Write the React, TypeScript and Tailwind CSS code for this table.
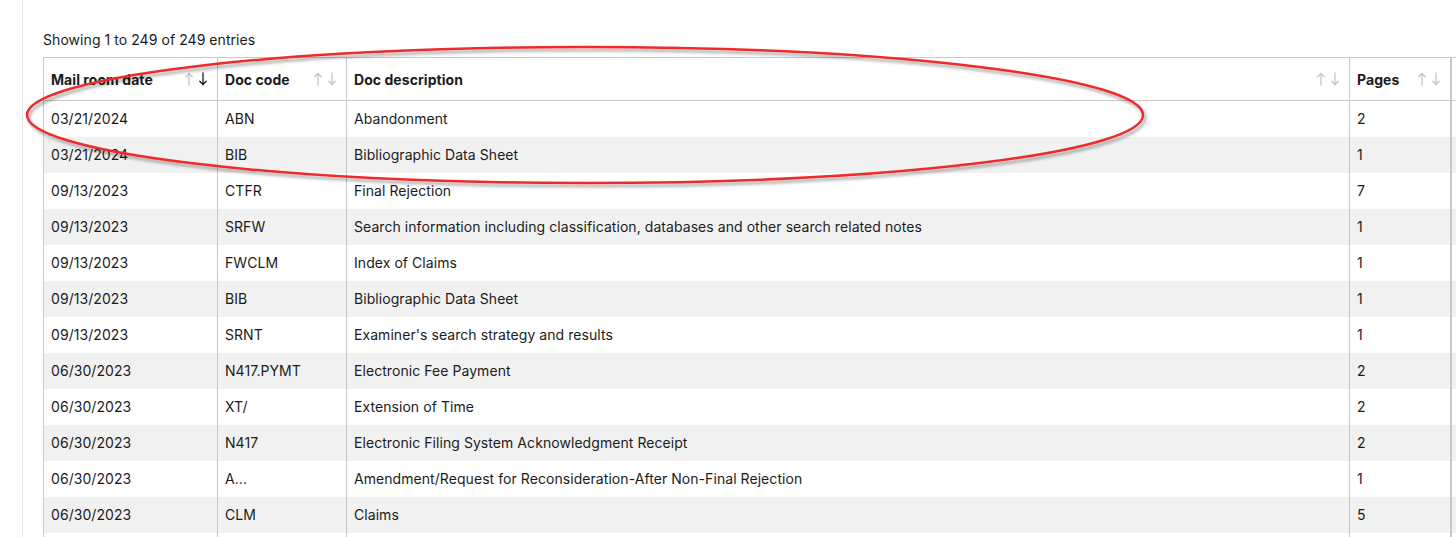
const rows = [
  ["03/21/2024", "ABN", "Abandonment", "2"],
  ["03/21/2024", "BIB", "Bibliographic Data Sheet", "1"],
  ["09/13/2023", "CTFR", "Final Rejection", "7"],
  ["09/13/2023", "SRFW", "Search information including classification, databases and other search related notes", "1"],
  ["09/13/2023", "FWCLM", "Index of Claims", "1"],
  ["09/13/2023", "BIB", "Bibliographic Data Sheet", "1"],
  ["09/13/2023", "SRNT", "Examiner's search strategy and results", "1"],
  ["06/30/2023", "N417.PYMT", "Electronic Fee Payment", "2"],
  ["06/30/2023", "XT/", "Extension of Time", "2"],
  ["06/30/2023", "N417", "Electronic Filing System Acknowledgment Receipt", "2"],
  ["06/30/2023", "A...", "Amendment/Request for Reconsideration-After Non-Final Rejection", "1"],
  ["06/30/2023", "CLM", "Claims", "5"],
  ["", "", "", ""],
]

function SortIcon({ active }: { active?: boolean }) {
  return (
    <svg width="23" height="14" viewBox="0 0 23 14" fill="none" strokeWidth="1.3" strokeLinecap="round" strokeLinejoin="round">
      <g stroke="#c4c4c4">
        <path d="M4 13V1.5" />
        <path d="M0.8 4.8L4 1.5L7.2 4.8" />
      </g>
      <g stroke={active ? "#1b1b1b" : "#c4c4c4"}>
        <path d="M18 1V12.5" />
        <path d="M14.8 9.2L18 12.5L21.2 9.2" />
      </g>
    </svg>
  )
}

const widths = ["w-[174px]", "w-[129px]", "w-[1003px]", "w-[101px]"]

export default function App() {
  return (
    <div className="relative w-screen h-[537px] overflow-hidden bg-white text-[#1b1b1b] text-[14px] tracking-[0.06px]" style={{ fontFamily: "Inter, 'Liberation Sans', sans-serif" }}>
      <div className="pl-[22px]">
        <div className="border-l border-[#ececec] pl-5 pt-[30px] min-h-[600px]">
          <div className="h-[27px] leading-[20px]">Showing 1 to 249 of 249 entries</div>

          {/* table */}
          <div className="w-[1600px]">
            <div className="flex h-[44px] border-y border-[#c8c8c8] font-bold">
              {["Mail room date", "Doc code", "Doc description", "Pages"].map((h, i) => (
                <div key={h} className={`${widths[i]} shrink-0 border-l border-[#c8c8c8] pl-[7px] pr-[9px] flex items-center justify-between`}>
                  <span>{h}</span>
                  <SortIcon active={i === 0} />
                </div>
              ))}
              <div className="w-[200px] shrink-0 border-l-2 border-[#c8c8c8]" />
            </div>
            {rows.map((r, ri) => (
              <div key={ri} className={`flex h-[36px] ${ri % 2 === 1 ? "bg-[#f1f1f1]" : "bg-white"}`}>
                {r.map((c, i) => (
                  <div key={i} className={`${widths[i]} shrink-0 border-l border-[#c8c8c8] pl-[7px] pb-[2px] flex items-center`}>
                    {c}
                  </div>
                ))}
                <div className="w-[200px] shrink-0 border-l-2 border-[#c8c8c8]" />
              </div>
            ))}
          </div>
        </div>
      </div>

      {/* red annotation ellipse */}
      <svg className="absolute left-0 top-0 pointer-events-none" width="1456" height="537">
        <defs>
          <filter id="sh" x="-5%" y="-30%" width="110%" height="160%">
            <feDropShadow dx="2" dy="3" stdDeviation="1.5" floodColor="#000" floodOpacity="0.35" />
          </filter>
        </defs>
        <ellipse cx="585" cy="115" rx="558" ry="68" fill="none" stroke="#ee2b2b" strokeWidth="2.5" filter="url(#sh)" />
      </svg>
    </div>
  )
}
